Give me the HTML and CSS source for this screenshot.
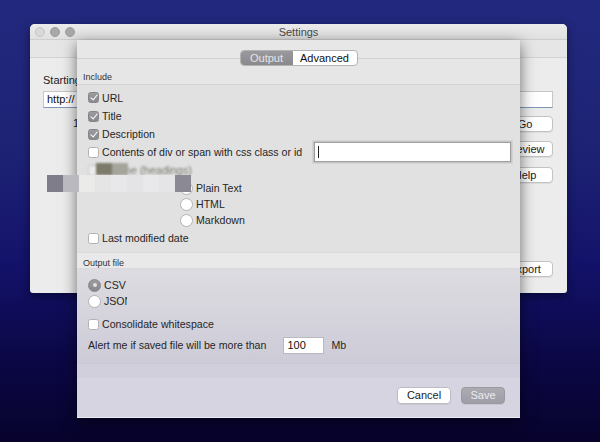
FILE: index.html
```html
<!DOCTYPE html>
<html>
<head>
<meta charset="utf-8">
<link rel="stylesheet" href="styles.css">
</head>
<body>
<div class="desktop">
  <div class="back-window">
    <div class="titlebar">
      <div class="lights"><span class="light dim"></span><span class="light"></span><span class="light"></span></div>
      <div class="title">Settings</div>
      <div></div>
    </div>
    <div class="back-toolbar"></div>
    <div class="back-content">
      <div class="back-label">Starting</div>
      <div class="back-input">http://</div>
      <div class="back-row">
        <div class="back-left"><span class="back-num">1</span></div>
        <div class="back-buttons">
          <div class="btn">Go</div>
          <div class="btn b2">Preview</div>
          <div class="btn b3">Help</div>
          <div class="btn export">Export</div>
        </div>
      </div>
    </div>
  </div>

  <div class="sheet">
    <div class="sheet-top">
      <div class="seg"><span class="seg-on">Output</span><span class="seg-off">Advanced</span></div>
    </div>
    <div class="sec-head">Include</div>
    <div class="inc-body">
      <div class="row r-url"><span class="cb on"></span>URL</div>
      <div class="row"><span class="cb on"></span>Title</div>
      <div class="row"><span class="cb on"></span>Description</div>
      <div class="row"><span class="cb"></span>Contents of div or span with css class or id<div class="field"><span class="caret"></span></div></div>
      <div class="row ghost"><span class="cb"></span>Outline (headings)</div>
      <div class="rrow first"><span class="rb"></span>Plain Text</div>
      <div class="rrow"><span class="rb"></span>HTML</div>
      <div class="rrow"><span class="rb"></span>Markdown</div>
      <div class="row last"><span class="cb"></span>Last modified date</div>
    </div>
    <div class="sec-head out-head">Output file</div>
    <div class="out-body">
      <div class="orow csv"><span class="rb sel"></span>CSV</div>
      <div class="orow"><span class="rb"></span><span class="clip">JSON</span></div>
      <div class="row cons"><span class="cb"></span>Consolidate whitespace</div>
      <div class="alert-row">Alert me if saved file will be more than<div class="num">100</div><span class="mb">Mb</span></div>
    </div>
    <div class="band"></div>
    <div class="footer">
      <div class="pbtn">Cancel</div>
      <div class="pbtn save">Save</div>
    </div>
  </div>

  <div class="redact-top"><span class="px p1"></span><span class="px p2"></span></div>
  <div class="redact">
    <span class="px c1"></span><span class="px c2"></span><span class="px c3"></span><span class="px c4"></span><span class="px c5"></span><span class="px c6"></span><span class="px c7"></span><span class="px c8"></span><span class="px c9"></span>
  </div>
</div>
</body>
</html>
```
FILE: styles.css
```css
* { box-sizing: border-box; }
html, body { margin: 0; padding: 0; }
body {
  width: 600px;
  height: 442px;
  overflow: hidden;
  font-family: "Liberation Sans", Arial, sans-serif;
  font-size: 10.6px;
  color: #262626;
}
.desktop {
  position: relative;
  width: 600px;
  height: 442px;
  background: linear-gradient(to bottom, #22297e 0%, #1d2274 35%, #13126a 60%, #0b0744 82%, #07032c 100%);
}

/* back window */
.back-window {
  position: absolute;
  left: 30px;
  top: 24px;
  width: 537px;
  height: 269px;
  background: #ececec;
  border-radius: 5px 5px 3px 3px;
  box-shadow: 0 3px 10px rgba(0,0,0,0.45);
  overflow: hidden;
}
.titlebar {
  height: 16px;
  display: grid;
  grid-template-columns: 1fr auto 1fr;
  align-items: center;
  background: linear-gradient(#ebebeb, #e0e0e0);
  border-bottom: 1px solid #cdcdcd;
}
.lights { display: flex; gap: 5px; padding-left: 5px; }
.light {
  width: 10px; height: 10px; border-radius: 50%;
  background: #a8a8a8;
  border: 1px solid #9c9c9c;
}
.light.dim { background: #d9d9d9; border-color: #c4c4c4; }
.title { font-size: 11px; color: #4a4a4a; }
.back-toolbar {
  height: 18px;
  background: #e6e6e6;
  border-bottom: 1px solid #d2d2d2;
}
.back-content { padding: 15px 14px 0 13px; }
.back-label { height: 14px; line-height: 14px; font-size: 11px; color: #222; }
.back-input {
  margin-top: 4px;
  height: 17px;
  line-height: 15px;
  padding-left: 3px;
  background: #fff;
  border: 1px solid #c6c6c6;
  border-bottom: 1px solid #8096b8;
  font-size: 11px;
  color: #111;
}
.back-row { display: flex; justify-content: space-between; }
.back-num { display: block; margin: 9px 0 0 30px; font-size: 11px; color: #222; }
.back-buttons { display: flex; flex-direction: column; margin-top: 8px; }
.btn {
  width: 60px; height: 16px;
  line-height: 14px;
  text-align: center;
  font-size: 11px;
  color: #1a1a1a;
  background: #fff;
  border: 1px solid #c2c2c2;
  border-radius: 4px;
  box-shadow: 0 1px 0 rgba(0,0,0,0.06);
  padding-left: 4px;
}
.btn.b2 { margin-top: 9px; }
.btn.b3 { margin-top: 10px; }
.btn.export { margin-top: 78px; }

/* sheet */
.sheet {
  position: absolute;
  left: 77px;
  top: 40px;
  width: 443px;
  height: 378px;
  display: flex;
  flex-direction: column;
  box-shadow: 0 4px 14px rgba(0,0,0,0.55);
  border-bottom: 1px solid #ececf2;
}
.sheet-top {
  height: 26px;
  flex: none;
  display: flex;
  justify-content: center;
  padding-top: 10px;
  background: linear-gradient(#e7e7e7 0, #e7e7e7 18px, #d0d0d0 18px, #d0d0d0 19px, #e6e6e6 19px);
}
.seg {
  display: flex;
  height: 16px;
  border: 1px solid #b3b3b3;
  border-radius: 4px;
  overflow: hidden;
  font-size: 11px;
  line-height: 14px;
  background: #fff;
}
.seg-on {
  width: 52px;
  text-align: center;
  color: #e4e4e6;
  background: linear-gradient(#9a9a9e, #88888d);
}
.seg-off { width: 64px; text-align: center; color: #111; }
.sec-head {
  height: 19px;
  flex: none;
  padding: 6px 0 0 6px;
  font-size: 9px;
  line-height: 10px;
  color: #333;
  background: #e6e6e6;
  border-bottom: 1px solid #d3d3d3;
}
.inc-body {
  height: 167px;
  flex: none;
  padding: 3px 9px 0 11px;
  background: #e1e1e1;
}
.row {
  display: flex;
  align-items: center;
  height: 18px;
  white-space: nowrap;
}
.row.r-url { height: 19px; }
.row.last { margin-top: 1px; }
.cb {
  width: 11px; height: 11px;
  flex: none;
  margin-right: 3px;
  border-radius: 2.5px;
  background: #fff;
  border: 1px solid #b2b2b2;
  position: relative;
}
.cb.on {
  background: linear-gradient(#9b9ba0, #88888d);
  border-color: #858589;
}
.cb.on::after {
  content: "";
  position: absolute;
  left: 3px; top: 0px;
  width: 3px; height: 6px;
  border: solid #fff;
  border-width: 0 1.5px 1.5px 0;
  transform: rotate(40deg);
}
.field {
  margin-left: auto;
  width: 197px;
  height: 20px;
  flex: none;
  background: #fff;
  border: 1px solid #9e9e9e;
  box-shadow: 0 0 0 1.5px #c6c6c6;
  display: flex;
  align-items: center;
  padding-left: 3px;
}
.caret { width: 1px; height: 12px; background: #222; }
.ghost { filter: blur(1.2px); color: #75756a; font-size: 11px; }
.ghost .cb { background: #ececec; border-color: #c4c4c4; }
.rrow {
  display: flex;
  align-items: center;
  height: 16px;
  padding-left: 92px;
}
.rrow.first { margin-top: 1px; }
.rb {
  width: 13px; height: 13px;
  flex: none;
  border-radius: 50%;
  background: #fff;
  border: 1px solid #b4b4b4;
  margin-right: 3px;
  position: relative;
}
.rb.sel {
  background: linear-gradient(#9b9ba0, #87878c);
  border-color: #85858a;
}
.rb.sel::after {
  content: "";
  position: absolute;
  left: 3.5px; top: 3.5px;
  width: 4px; height: 4px;
  border-radius: 50%;
  background: #e2e2e2;
}
.out-head {
  height: 17px;
  padding-top: 5px;
  background: #e9e9e9;
  border-top: 1px solid #dadada;
  border-bottom: 1px solid #d8d8de;
}
.out-body {
  height: 94px;
  flex: none;
  padding: 8px 9px 0 11px;
  background: linear-gradient(#dddce1, #cdcbd7);
}
.orow { display: flex; align-items: center; height: 16px; }
.clip { display: inline-block; width: 23px; overflow: hidden; white-space: nowrap; }
.row.cons { margin-top: 6px; }
.alert-row {
  display: flex;
  align-items: center;
  height: 20px;
  margin-top: 2px;
  white-space: nowrap;
}
.num {
  margin-left: 17px;
  width: 41px; height: 17px;
  line-height: 15px;
  padding-left: 3px;
  background: #fff;
  border: 1px solid #b8b8be;
  font-size: 11px;
  color: #111;
}
.mb { margin-left: 7px; }
.band {
  height: 15px;
  flex: none;
  background: #d1cfdb;
  border-top: 1px solid #cac8d3;
}
.footer {
  flex: 1;
  display: flex;
  justify-content: flex-end;
  gap: 10px;
  padding: 9px 15px 0 0;
  background: #d6d4e0;
}
.pbtn {
  width: 54px; height: 17px;
  line-height: 15px;
  text-align: center;
  font-size: 11px;
  color: #1a1a1a;
  background: #fff;
  border: 1px solid #bdbcc4;
  border-radius: 4px;
  box-shadow: 0 1px 0 rgba(0,0,0,0.06);
}
.pbtn.save {
  width: 44px;
  color: #ececf0;
  background: linear-gradient(#acabb2, #9f9ea6);
  border-color: #9a99a1;
}

/* redaction (pixelated) */
.redact {
  position: absolute;
  left: 47px;
  top: 175px;
  display: flex;
  filter: blur(0.4px);
}
.redact .px { width: 16px; height: 17px; }
.c1 { background: #7f7d89; }
.c2 { background: #bbb9c0; }
.c3 { background: #ebebe9; }
.c4 { background: #e5e5e5; }
.c5 { background: #e8e8ea; }
.c6 { background: #e4e4e7; }
.c7 { background: #e9e9eb; }
.c8 { background: #e5e5e8; }
.c9 { background: #8b8993; }
.redact-top {
  position: absolute;
  left: 96px;
  top: 163px;
  display: flex;
  filter: blur(1px);
}
.redact-top .px { width: 16px; height: 12px; }
.p1 { background: #7c7b6a; }
.p2 { background: #a6a59c; }
```
